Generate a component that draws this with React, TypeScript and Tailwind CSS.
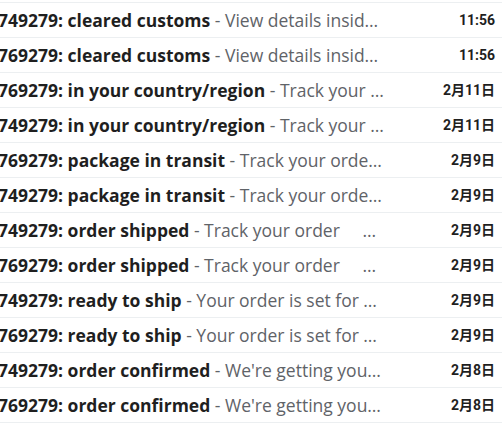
const rows = [
  { subject: "749279: cleared customs", snippet: "View details insid…", date: "11:56" },
  { subject: "769279: cleared customs", snippet: "View details insid…", date: "11:56" },
  { subject: "769279: in your country/region", snippet: "Track your …", date: "2月11日" },
  { subject: "749279: in your country/region", snippet: "Track your …", date: "2月11日" },
  { subject: "769279: package in transit", snippet: "Track your orde…", date: "2月9日" },
  { subject: "749279: package in transit", snippet: "Track your orde…", date: "2月9日" },
  { subject: "749279: order shipped", snippet: "Track your order", tail: "…", date: "2月9日" },
  { subject: "769279: order shipped", snippet: "Track your order", tail: "…", date: "2月9日" },
  { subject: "749279: ready to ship", snippet: "Your order is set for …", date: "2月9日" },
  { subject: "769279: ready to ship", snippet: "Your order is set for …", date: "2月9日" },
  { subject: "749279: order confirmed", snippet: "We're getting you…", date: "2月8日" },
  { subject: "769279: order confirmed", snippet: "We're getting you…", date: "2月8日" },
];

export default function App() {
  return (
    <div className="h-[427px] w-[502px] overflow-hidden bg-white pt-[2px] font-['Open_Sans','Noto_Sans_CJK_SC',sans-serif]">
      <div className="border-t border-[#eceff1]">
        {rows.map((r, i) => (
          <div key={i} className="flex h-[35px] items-center border-b border-[#eceff1]">
            <div className="ml-[-2px] flex w-[392px] items-center overflow-hidden whitespace-nowrap text-[17.5px] leading-[26px]">
              <span className="font-bold text-[#1f1f1f]">{r.subject}</span>
              <span className="whitespace-pre text-[#5f6368]"> - {r.snippet}</span>
              {r.tail && <span className="ml-auto mr-[14px] text-[#5f6368]">{r.tail}</span>}
            </div>
            <div className="flex-1 pr-[7px] text-right font-['Roboto','Noto_Sans_CJK_SC',sans-serif] text-[14px] font-bold text-[#1f1f1f]">
              {r.date}
            </div>
          </div>
        ))}
      </div>
    </div>
  );
}
